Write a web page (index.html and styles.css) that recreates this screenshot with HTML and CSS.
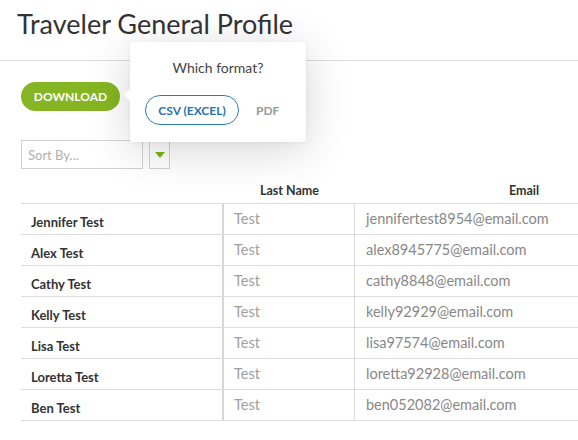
FILE: index.html
```html
<!DOCTYPE html>
<html>
<head>
<meta charset="utf-8">
<link rel="stylesheet" href="styles.css">
</head>
<body>
<div class="page">
  <header class="header">
    <h1 class="title">Traveler General Profile</h1>
  </header>
  <div class="actions">
    <button class="download">DOWNLOAD</button>
  </div>
  <div class="sort">
    <div class="sort-select">Sort By...</div>
    <div class="sort-toggle"><span class="tri"></span></div>
  </div>
  <div class="table">
    <div class="thead">
      <div class="th th-name"></div>
      <div class="th th-last">Last Name</div>
      <div class="th th-email">Email</div>
    </div>
    <div class="tr"><div class="td name">Jennifer Test</div><div class="td last">Test</div><div class="td email">jennifertest8954@email.com</div></div>
    <div class="tr"><div class="td name">Alex Test</div><div class="td last">Test</div><div class="td email">alex8945775@email.com</div></div>
    <div class="tr"><div class="td name">Cathy Test</div><div class="td last">Test</div><div class="td email">cathy8848@email.com</div></div>
    <div class="tr"><div class="td name">Kelly Test</div><div class="td last">Test</div><div class="td email">kelly92929@email.com</div></div>
    <div class="tr"><div class="td name">Lisa Test</div><div class="td last">Test</div><div class="td email">lisa97574@email.com</div></div>
    <div class="tr"><div class="td name">Loretta Test</div><div class="td last">Test</div><div class="td email">loretta92928@email.com</div></div>
    <div class="tr"><div class="td name">Ben Test</div><div class="td last">Test</div><div class="td email">ben052082@email.com</div></div>
  </div>

  <div class="popover">
    <span class="popover-arrow"></span>
    <div class="popover-title">Which format?</div>
    <div class="popover-options">
      <button class="opt opt-csv">CSV (EXCEL)</button>
      <button class="opt opt-pdf">PDF</button>
    </div>
  </div>
</div>
</body>
</html>
```

FILE: styles.css
```css
html, body {
  margin: 0;
  padding: 0;
  background: #fff;
  overflow: hidden;
}
body {
  font-family: Lato, "Open Sans", sans-serif;
  color: #333;
  width: 578px;
  height: 440px;
}
.page {
  position: relative;
  width: 578px;
  height: 440px;
  overflow: hidden;
}
.header {
  height: 60px;
  border-bottom: 1px solid #dcdcdc;
  box-sizing: content-box;
}
.title {
  margin: 0;
  padding: 9px 0 0 17px;
  font-size: 27px;
  line-height: 30px;
  font-weight: 400;
  color: #333;
}
.actions {
  padding: 21px 0 0 21px;
  display: flex;
}
.download {
  width: 99px;
  height: 29px;
  border: none;
  border-radius: 15px;
  background: #85b522;
  color: #fff;
  font-family: Lato, sans-serif;
  font-weight: 700;
  font-size: 12px;
  padding: 0;
  cursor: pointer;
}
.sort {
  display: flex;
  gap: 6px;
  padding: 29px 0 0 21px;
}
.sort-select {
  box-sizing: border-box;
  width: 122px;
  height: 29px;
  border: 1px solid #d2d2d2;
  font-size: 13px;
  color: #b0b0b0;
  padding: 6px 0 0 6px;
}
.sort-toggle {
  box-sizing: border-box;
  width: 21px;
  height: 29px;
  border: 1px solid #d2d2d2;
  display: flex;
  align-items: center;
  justify-content: center;
}
.tri {
  width: 0;
  height: 0;
  border-left: 5px solid transparent;
  border-right: 5px solid transparent;
  border-top: 6px solid #7cb518;
}
.table {
  margin-left: 21px;
}
.thead, .tr {
  display: grid;
  grid-template-columns: 203px 131px 338px;
}
.thead {
  height: 34px;
  border-bottom: 1px solid #dcdcdc;
}
.th {
  font-size: 12.5px;
  font-weight: 700;
  color: #333;
  padding-top: 14px;
  text-align: center;
}
.tr {
  height: 30px;
  border-bottom: 1px solid #dcdcdc;
}
.td {
  font-size: 14.5px;
}
.name {
  font-size: 13px;
  font-weight: 700;
  color: #333;
  padding: 10px 0 0 10px;
  border-right: 2px solid #d6d6d6;
}
.last {
  color: #a0a0a0;
  padding: 6px 0 0 10px;
  border-right: 1px solid #dcdcdc;
}
.email {
  color: #888;
  padding: 6px 0 0 11px;
}
.popover {
  position: absolute;
  left: 130px;
  top: 42px;
  width: 176px;
  height: 100px;
  box-sizing: border-box;
  background: #fff;
  border-radius: 3px;
  box-shadow: 0 8px 44px rgba(0, 0, 0, 0.17), 0 1px 4px rgba(0, 0, 0, 0.06);
  display: flex;
  flex-direction: column;
  align-items: center;
}
.popover-arrow {
  position: absolute;
  left: -6px;
  top: 47px;
  width: 0;
  height: 0;
  border-top: 6px solid transparent;
  border-bottom: 6px solid transparent;
  border-right: 6px solid #fff;
}
.popover-title {
  margin-top: 17px;
  font-size: 14px;
  color: #444;
}
.popover-options {
  display: flex;
  align-items: center;
  width: 100%;
  margin-top: 19px;
  padding-left: 15px;
  box-sizing: border-box;
}
.opt {
  font-family: Lato, sans-serif;
  font-weight: 700;
  font-size: 12px;
  background: none;
  cursor: pointer;
  padding: 0;
}
.opt-csv {
  width: 94px;
  height: 30px;
  border: 1px solid #2c7bb6;
  border-radius: 15px;
  color: #2872b0;
}
.opt-pdf {
  border: none;
  color: #999;
  margin-left: 17px;
}
```
